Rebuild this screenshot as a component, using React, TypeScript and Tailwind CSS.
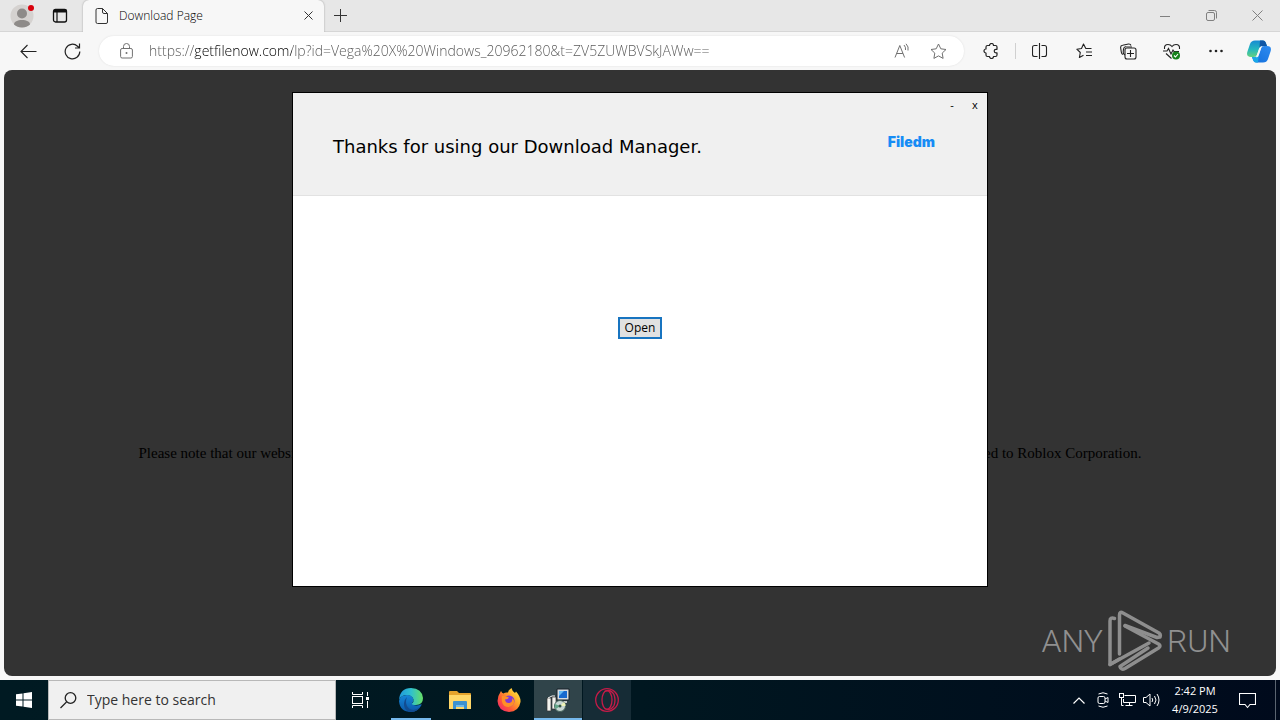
import React, { useState } from "react";

const iconBtn = "flex h-8 w-11 shrink-0 items-center justify-center";
const taskBtn = "relative flex h-10 w-12 items-center justify-center";
const winBtn = "flex h-8 w-[46px] items-center justify-center text-[#808080]";

const TabStrip = () => {
  return (
    <header className="flex h-8 items-center border-b border-[#d6d6d6] bg-[#e7e7e7]">
      <button aria-label="Profile" className="relative flex h-8 w-11 items-center justify-center">
        <svg width="24" height="24" viewBox="0 0 24 24">
          <circle cx="12" cy="12" r="11.500" fill="#d5d2d0" />
          <circle cx="12" cy="9.500" r="5" fill="#8e8b89" />
          <path d="M4 20.500c0-3 3.500-4.500 8-4.500s8 1.500 8 4.500c-2 2-5 3-8 3s-6-1-8-3z" fill="#8e8b89" />
          <circle cx="21" cy="4" r="3" fill="#d8000c" />
        </svg>
      </button>
      <button aria-label="Tab actions" className="flex h-8 w-8 items-center justify-center">
        <svg width="16" height="16" viewBox="0 0 16 16" fill="none" stroke="#111">
          <rect x="1.500" y="1.500" width="13" height="12.500" rx="2" strokeWidth="1.300" />
          <path d="M1.500 3h13" strokeWidth="3" />
          <path d="M5 4v10" strokeWidth="1.200" />
        </svg>
      </button>
      <div className="ml-[7px] flex h-8 w-[241px] items-center rounded-t-md bg-[#f7f7f7] pr-2 pl-3 shadow-[0_0_2px_#999]">
        <svg className="shrink-0" width="13" height="16" viewBox="0 0 13 16" fill="none" stroke="#333">
          <path d="M1 2q0-1.500 1.500-1.500H7.500L12.500 5.500V14q0 1.500-1.500 1.500H2.500Q1 15.500 1 14zM7.500 .5V4q0 1.500 1.500 1.500h3.500" />
        </svg>
        <span className="ml-[11px] flex-1 text-[12px] leading-4 font-light text-black">Download Page</span>
        <button aria-label="Close tab" className="flex h-4 w-4 items-center justify-center">
          <svg width="9" height="9" viewBox="0 0 9 9" stroke="#333">
            <path d="M.5.5l8 8M8.500.5l-8 8" />
          </svg>
        </button>
      </div>
      <button aria-label="New tab" className="flex h-8 w-8 items-center justify-center">
        <svg width="13" height="13" viewBox="0 0 13 13" stroke="#333">
          <path d="M6.500 0v13M0 6.500h13" />
        </svg>
      </button>
      <div className="ml-auto flex">
        <button aria-label="Minimize" className={winBtn}>
          <svg width="10" height="10" viewBox="0 0 10 10" stroke="currentColor">
            <path d="M0 5.500h10" />
          </svg>
        </button>
        <button aria-label="Restore" className={winBtn}>
          <svg width="11" height="11" viewBox="0 0 11 11" fill="none" stroke="currentColor">
            <rect x=".5" y="2.500" width="8" height="8" rx="1.500" />
            <path d="M2.500.5h6q2 0 2 2v6" />
          </svg>
        </button>
        <button aria-label="Close" className={winBtn}>
          <svg width="11" height="11" viewBox="0 0 11 11" stroke="currentColor">
            <path d="M.5.5l10 10M10.500.5l-10 10" />
          </svg>
        </button>
      </div>
    </header>
  );
};

const Toolbar = () => {
  const [url, setUrl] = useState(
    "https://getfilenow.com/lp?id=Vega%20X%20Windows_20962180&t=ZV5ZUWBVSkJAWw=="
  );

  return (
    <nav className="flex h-[38px] items-center bg-[#f7f7f7] pl-[6px]">
      <button aria-label="Back" className={iconBtn}>
        <svg width="17" height="15" viewBox="0 0 17 15" fill="none" stroke="#222" strokeWidth="1.100">
          <path d="M16.500 7.500H1M7.500 1L1 7.500 7.500 14" />
        </svg>
      </button>
      <button aria-label="Refresh" className={iconBtn}>
        <svg width="17" height="17" viewBox="0 0 17 17" fill="none" stroke="#222" strokeWidth="1.200">
          <path d="M15.800 8.500A7.300 7.300 0 1 1 13.500 3.200L15.500 5M15.500.5V5H11" />
        </svg>
      </button>
      <div className="mx-[5px] flex h-[30px] min-w-0 flex-1 items-center rounded-full bg-white pr-[10px] pl-[15px] shadow-[0_0_2px_#ddd]">
        <button aria-label="Site information" className="flex h-6 w-6 shrink-0 items-center justify-center">
          <svg width="13" height="16" viewBox="0 0 13 16" fill="none" stroke="#707070">
            <rect x=".6" y="5.500" width="11.800" height="9.500" rx="1.500" />
            <path d="M3.500 5.500V3.500a3 3 0 0 1 6 0v2" />
            <circle cx="6.500" cy="10" r="1" fill="#707070" stroke="none" />
          </svg>
        </button>
        <input
          aria-label="Address"
          value={url}
          onChange={(e) => setUrl(e.target.value)}
          className="ml-[11px] h-6 min-w-0 flex-1 bg-[linear-gradient(to_right,#555_46px,#000_46px,#000_143px,#555_143px)] bg-clip-text text-[14px] leading-6 font-light text-transparent caret-black outline-none"
        />
        <button aria-label="Read aloud" className="flex h-8 w-10 items-center justify-center">
          <svg width="17" height="16" viewBox="0 0 17 16" fill="none" stroke="#707070">
            <path d="M1 14.500L5.800 2.500 10.600 14.500M2.700 10.500h6.200M10 2q2 2 1.500 5M12 .800q3 3 2 6.700" />
          </svg>
        </button>
        <button aria-label="Add to favorites" className="flex h-8 w-8 items-center justify-center">
          <svg width="17" height="17" viewBox="0 0 17 17" fill="none" stroke="#707070" strokeLinejoin="round">
            <path d="M8.500 1l2.300 4.800 5.200.7-3.800 3.600.9 5.300-4.600-2.500-4.600 2.500.9-5.300L1 6.500l5.200-.7z" />
          </svg>
        </button>
      </div>
      <button aria-label="Extensions" className={iconBtn}>
        <svg width="16" height="16" viewBox="0 0 16 16" fill="none" stroke="#222" strokeWidth="1.200" strokeLinejoin="round">
          <path d="M4.500 2.500h2a2 2 0 0 1 4 0h2q1.500 0 1.500 1.500v2.300h-1a1.800 1.800 0 0 0 0 3.600h1V12q0 1.500-1.500 1.500h-2a2 2 0 0 1-4 0h-2Q3 13.500 3 12v-2a2 2 0 0 1 0-4V4q0-1.500 1.500-1.500z" />
        </svg>
      </button>
      <div className="mx-[2px] h-4 w-px bg-[#d0d0d0]" />
      <button aria-label="Split screen" className={iconBtn}>
        <svg width="16" height="16" viewBox="0 0 16 16" fill="none" stroke="#222" strokeWidth="1.100">
          <path d="M7.500 0v16M5.500 2.500h-3q-2 0-2 2v7q0 2 2 2h3M9.500 2.500h3q2 0 2 2v7q0 2-2 2h-3" />
        </svg>
      </button>
      <button aria-label="Favorites" className={iconBtn}>
        <svg width="17" height="16" viewBox="0 0 17 16" fill="none" stroke="#222" strokeWidth="1.100" strokeLinejoin="round">
          <path d="M15.500 5.500H9.800L7.500 1 5.500 5.500.800 6.200l3.500 3.300-.9 5L7.500 12.200M10 9H16M10 12.500h6" />
        </svg>
      </button>
      <button aria-label="Collections" className={iconBtn}>
        <svg width="17" height="17" viewBox="0 0 17 17" fill="none" stroke="#222" strokeWidth="1.100">
          <path d="M3 11.500Q1.500 11 1.300 9L.6 4.500q0-2 2-2.200L8.500 1q2-.2 2.500 1.500" />
          <rect x="5" y="5" width="11" height="11" rx="2" />
          <path d="M5 12q-2-1-1.800-3L3.500 6q.5-2.500 2.500-2.200L12 4M10.500 7v7M7 10.500h7" />
        </svg>
      </button>
      <button aria-label="Browser essentials" className={iconBtn}>
        <svg width="18" height="17" viewBox="0 0 18 17" fill="none" stroke="#222" strokeWidth="1.100">
          <path d="M1.500 6Q1 1.500 5 1.500q2.500 0 4 2 1.500-2 4-2 4 0 3.500 4.500M3 10.500l5.500 5M0 8h4l1.500-2.500L8 11l2-4 1 1.500h5" />
          <circle cx="13" cy="12.500" r="4" fill="#16821b" stroke="none" />
          <path d="M11 12.500l1.500 1.500 2.500-3" stroke="#fff" />
        </svg>
      </button>
      <button aria-label="Settings and more" className={iconBtn}>
        <svg width="14" height="4" viewBox="0 0 14 4" fill="#222">
          <circle cx="1.500" cy="2" r="1.300" />
          <circle cx="7" cy="2" r="1.300" />
          <circle cx="12.500" cy="2" r="1.300" />
        </svg>
      </button>
      <button aria-label="Copilot" className="flex h-8 w-[42px] shrink-0 items-center justify-center">
        <svg width="24" height="23" viewBox="0 0 24 23">
          <defs>
            <linearGradient id="copA" x1="0" y1="0" x2="0" y2="1">
              <stop offset="0" stopColor="#168bd3" />
              <stop offset=".55" stopColor="#25b8bd" />
              <stop offset="1" stopColor="#64d17f" />
            </linearGradient>
            <linearGradient id="copB" x1="1" y1="0" x2="0" y2="1">
              <stop offset="0" stopColor="#2e8bf0" />
              <stop offset="1" stopColor="#126fdc" />
            </linearGradient>
          </defs>
          <path d="M8 .5h8q2 0 2.700 2L20 6h-4q-3 0-4 3l-2 6q-.7 2-3 2H4q-5 0-3.700-5L3 4Q4.200.5 8 .5z" fill="url(#copA)" />
          <path d="M13 .5h3q2 0 2.700 2L20 6h-4q-3 0-3.500 1.500z" fill="#1056a5" />
          <path d="M16 22.500H9q-2 0-2.700-2L5 17h3q3 0 4-3l2-6q.8-2 3-2h3q5 0 3.700 5L21 19q-1.200 3.500-5 3.500z" fill="url(#copB)" />
          <path d="M11 22.500H9q-2 0-2.700-2L5 17h3q3 0 4-3z" fill="#19a8e8" />
          <path d="M12 9q.8-2.500 3-3l-3.500 10q-.5 1.300-2.500 1.200z" fill="#f7f7f7" />
        </svg>
      </button>
    </nav>
  );
};

const DownloadDialog = () => {
  return (
    <section
      role="dialog"
      aria-labelledby="dialog-title"
      className="absolute top-[22px] left-1/2 flex min-h-[495px] w-[696px] -translate-x-1/2 flex-col border border-black bg-white"
    >
      <div className="flex h-[103px] items-center justify-between border-b border-[#e2e2e2] bg-[#f0f0f0] pr-[52px] pl-10">
        <h1 id="dialog-title" className="pt-[6px] font-['DejaVu_Sans'] text-[18px] leading-6 text-black">
          Thanks for using our Download Manager.
        </h1>
        <span className="pb-1 font-['Inter'] text-[14px] leading-5 font-black text-[#168cf5]">Filedm</span>
      </div>
      <div className="absolute top-1 right-1 flex text-[11px] leading-4 text-black">
        <button aria-label="Minimize dialog" className="h-4 w-[30px]">-</button>
        <button aria-label="Close dialog" className="h-4 w-4">x</button>
      </div>
      <div className="flex justify-center pt-[121px]">
        <button className="h-[22px] w-[44px] border-2 border-[#1874c0] bg-[#e1e1e1] text-[12px] leading-4 text-black">
          Open
        </button>
      </div>
    </section>
  );
};

const Watermark = () => {
  return (
    <div className="absolute right-[45px] bottom-1 flex items-center gap-1 font-['Roboto'] text-[32px] leading-[62px] font-light text-[#909090]">
      <span>ANY</span>
      <svg width="56" height="62" viewBox="0 0 56 62" fill="none" stroke="#8e8e8e" strokeWidth="3.500" strokeLinejoin="round" strokeLinecap="round">
        <path d="M7.500 8.500Q3 7 3 11V54.500L42 33" />
        <path d="M12.500 44V5q0-4 3.500-2L52 23q2 1.500 1 4l-3 .5L18 15.500" />
        <path d="M18 16L51.500 34q3 2 0 4L18 58.500q-4 2-5-2L41 38" />
        <path d="M3 54.500L12.500 49" />
      </svg>
      <span>RUN</span>
    </div>
  );
};

const PageView = () => {
  return (
    <main className="relative mx-1 mb-1 flex-1 overflow-hidden rounded-lg bg-[#333]">
      <p className="mx-auto mt-[374px] flex w-full max-w-[1003px] justify-between font-['Liberation_Serif'] text-[15px] leading-[18px] text-black">
        <span>Please note that our website</span>
        <span>is not affiliated to Roblox Corporation.</span>
      </p>
      <DownloadDialog />
      <Watermark />
    </main>
  );
};

const Taskbar = () => {
  const [search, setSearch] = useState("");

  return (
    <footer className="flex h-10 bg-linear-to-r from-[#001a22] via-[#001720] to-[#000a1c]">
      <button aria-label="Start" className={taskBtn}>
        <svg width="16" height="16" viewBox="0 0 16 16" fill="#fff">
          <path d="M0 2.300L6.500 1.400V7.500H0zM7.500 1.200L16 0V7.500H7.500zM0 8.500H6.500V14.600L0 13.700zM7.500 8.500H16V16L7.500 14.800z" />
        </svg>
      </button>
      <label className="flex h-10 w-72 items-center border border-[#b8b8b8] bg-[#f0f0f0] pl-[11px]">
        <svg className="shrink-0" width="17" height="17" viewBox="0 0 17 17" fill="none" stroke="#222" strokeWidth="1.300">
          <circle cx="10.500" cy="6" r="5.300" />
          <path d="M6.500 10L.5 16" />
        </svg>
        <input
          aria-label="Search"
          placeholder="Type here to search"
          value={search}
          onChange={(e) => setSearch(e.target.value)}
          className="ml-[10px] min-w-0 flex-1 text-[14px] leading-5 outline-none placeholder:text-[#333]"
        />
      </label>
      <button aria-label="Task view" className={taskBtn}>
        <svg width="17" height="16" viewBox="0 0 17 16" fill="none" stroke="#fff">
          <path d="M.5 0v2.500h10V0M.5 16v-2.500h10V16M15.500 0v4M15.500 9v7" />
          <rect x=".5" y="4.500" width="10" height="7" />
          <rect x="14" y="5" width="3" height="3" fill="#fff" stroke="none" />
        </svg>
      </button>
      <div className="ml-[3px] flex gap-px">
        <button aria-label="Microsoft Edge" className={taskBtn}>
          <svg width="24" height="24" viewBox="0 0 24 24">
            <defs>
              <linearGradient id="edgeA" x1="0" y1="0" x2="1" y2="0">
                <stop offset="0" stopColor="#2098dc" />
                <stop offset=".5" stopColor="#2fc0cf" />
                <stop offset="1" stopColor="#67df65" />
              </linearGradient>
              <linearGradient id="edgeB" x1="0" y1="0" x2="0" y2="1">
                <stop offset="0" stopColor="#1686d8" />
                <stop offset="1" stopColor="#0b58a8" />
              </linearGradient>
            </defs>
            <path d="M0 13Q1 7 8 7q6 0 6.500 5 0 1.500-1 2.500-1 1 .500 2 3 2 7.500 0 1.500-.5 1 .5Q19 24 12 24 1 24 0 13z" fill="url(#edgeB)" />
            <path d="M8 9q-3 7 2 11.500 5 3.500 11-1.500Q18 24 12 24 5.500 23 5 17q-.2-5 3-8z" fill="#124c91" />
            <path d="M0 12Q1 0 12 0q11 .5 12 10 0 7-7 7-4.500 0-4-1.500 2-1.500 1.500-4Q13.500 7 8 7 2 7 0 12z" fill="url(#edgeA)" />
          </svg>
          <span className="absolute bottom-0 left-1 h-[2px] w-10 bg-[#76b9ed]" />
        </button>
        <button aria-label="File Explorer" className={taskBtn}>
          <svg width="22" height="20" viewBox="0 0 22 20">
            <path d="M0 2q0-1 1-1h7l2 2h11q1 0 1 1v3H0z" fill="#e5a32c" />
            <path d="M0 5h22v14H0z" fill="#ffd768" />
            <path d="M4 19v-7q0-1 1-1h12q1 0 1 1v7h-3v-4H7v4z" fill="#3c91cf" />
            <path d="M7 15h8v2H7z" fill="#70b9e8" />
          </svg>
        </button>
        <button aria-label="Firefox" className={taskBtn}>
          <svg width="24" height="24" viewBox="0 0 24 24">
            <defs>
              <linearGradient id="fox" x1="1" y1="0" x2="0" y2="1">
                <stop offset="0" stopColor="#fff44f" />
                <stop offset=".35" stopColor="#ffad2b" />
                <stop offset=".65" stopColor="#ff5a35" />
                <stop offset="1" stopColor="#ec1580" />
              </linearGradient>
            </defs>
            <path d="M4 3q1 2 2.500 2.500Q8 4 11 4.500 11.500 1.500 14.500 0q.5 3 3.500 5l1-1.500Q24 9 23.500 14 22 23.500 12 24 1 23 .5 13 .5 8 4 3z" fill="url(#fox)" />
            <circle cx="12" cy="13" r="5.500" fill="#8139d4" />
            <path d="M5 8q4-.5 7 1.500-1 2-4 2 .5 4 4.500 3.500 3.500-1 2.500-5 4 3 1 7-4 3.500-8.500 1Q4 15 5 8z" fill="#ff8f27" />
          </svg>
        </button>
        <button aria-label="Setup" className={`${taskBtn} bg-[#30444a]`}>
          <svg width="24" height="24" viewBox="0 0 24 24">
            <path d="M11 1h12v11H11z" fill="#d5dbe0" stroke="#182028" />
            <path d="M13 3h8v7h-8z" fill="#1769cf" />
            <path d="M13 3h5l-5 5z" fill="#62b9f4" />
            <path d="M13 13h8v2h-8z" fill="#c0c5c8" />
            <path d="M1 10h4v13H1zM6 9h4v12H6z" fill="#f2f2ed" stroke="#333" strokeWidth=".7" />
            <path d="M2 10l4-2h3" stroke="#fff" />
            <circle cx="14" cy="18" r="5.500" fill="#c7d6d3" stroke="#46645c" />
            <path d="M14 18l4-4q2 2 1.500 4z" fill="#eff4b8" />
            <path d="M14 18l-4 3q-2-2-1-5z" fill="#63a789" />
            <circle cx="14" cy="18" r="1.500" fill="#354" />
          </svg>
          <span className="absolute bottom-0 left-0 h-[2px] w-12 bg-[#76b9ed]" />
        </button>
        <button aria-label="Opera GX" className={`${taskBtn} bg-[#162c36]`}>
          <svg width="24" height="24" viewBox="0 0 24 24" fill="none" stroke="#c51b48" strokeWidth="1.300">
            <circle cx="12" cy="12" r="11.300" />
            <ellipse cx="12" cy="12" rx="5" ry="9.300" />
            <path d="M9.500 3.500q6-3 9.500 3 2 5.500 0 11-3.500 6-9.500 3" />
          </svg>
        </button>
      </div>
      <div className="ml-auto flex items-center text-white">
        <button aria-label="Show hidden icons" className="flex h-10 w-6 items-center justify-center">
          <svg width="12" height="7" viewBox="0 0 12 7" fill="none" stroke="#fff" strokeWidth="1.200">
            <path d="M.5 6.500L6 1l5.500 5.500" />
          </svg>
        </button>
        <button aria-label="Meet now" className="flex h-10 w-6 items-center justify-center">
          <svg width="12" height="16" viewBox="0 0 12 16" fill="none" stroke="#fff">
            <rect x="1" y="4.500" width="7" height="7" rx="1.500" />
            <path d="M8 7l3-1.500v5L8 9M1.500 2Q6-.5 10.500 2M1.500 14Q6 16.500 10.500 14" />
          </svg>
        </button>
        <button aria-label="Network" className="flex h-10 w-6 items-center justify-center">
          <svg width="17" height="14" viewBox="0 0 17 14" fill="none" stroke="#fff">
            <path d="M5.500 2.500h11v7H4.500V6M10.500 9.500v3M6.500 12.500h7M2.500 6v6.500h2" />
            <rect x=".5" y=".5" width="4" height="4" />
            <path d="M2.500 4.500V6" />
          </svg>
        </button>
        <button aria-label="Volume" className="flex h-10 w-6 items-center justify-center">
          <svg width="17" height="14" viewBox="0 0 17 14" fill="none" stroke="#fff">
            <path d="M.5 4.500h2.500L7 1v12L3 9.500H.5zM9 5q1.500 2 0 4M11.500 3q3 4 0 8M14 1q4 6 0 12" />
          </svg>
        </button>
        <button className="h-10 w-16 text-center text-[11px] leading-[18px]">
          2:42 PM
          <br />
          4/9/2025
        </button>
        <button aria-label="Notifications" className="flex h-10 w-10 items-center justify-center">
          <svg width="17" height="17" viewBox="0 0 17 17" fill="none" stroke="#fff" strokeWidth="1.100">
            <path d="M.5 1.500h16v11h-5.500L8.500 15.500 6 12.500H.5z" />
          </svg>
        </button>
        <button aria-label="Show desktop" className="ml-2 h-10 w-[5px] border-l border-[#5a6470]" />
      </div>
    </footer>
  );
};

const App = () => {
  return (
    <div className="flex min-h-screen flex-col bg-[#f7f7f7] font-['Open_Sans',sans-serif]">
      <TabStrip />
      <Toolbar />
      <PageView />
      <Taskbar />
    </div>
  );
};

export default App;
